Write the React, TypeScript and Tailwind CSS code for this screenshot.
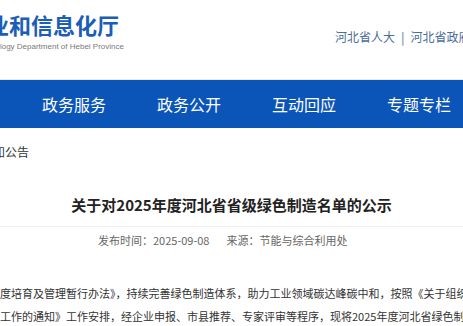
export default function App() {
  return (
    <div className="w-[463px] h-[326px] overflow-hidden bg-white font-['Noto_Sans_CJK_SC','Noto_Sans',sans-serif]">
      {/* header */}
      <div className="flex items-start h-[80px] border-b border-[#e6ebf2]">
        <div className="flex flex-col items-end w-[124px] shrink-0 pt-[9px]">
          <div className="whitespace-nowrap text-[22px] leading-[30px] font-bold text-[#1a5eb8] pr-[5px]">
            河北省工业和信息化厅
          </div>
          <div className="whitespace-nowrap text-[8px] leading-[10px] mt-[3px] text-[#7a7a7a] font-['Liberation_Sans',sans-serif]">
            Industry and Information Technology Department of Hebei Province
          </div>
        </div>
        <div className="ml-[211px] shrink-0 mt-[28px] flex items-center whitespace-nowrap text-[12px] leading-[18px] text-[#4a6d9a]">
          <span>河北省人大</span>
          <span className="mx-[6px] text-[#8a99ad] font-bold">|</span>
          <span>河北省政府</span>
        </div>
      </div>
      {/* nav */}
      <div className="flex items-center h-[48px] bg-[#0c55b8] pl-[42px] gap-[51px] text-white text-[16px] whitespace-nowrap">
        <span>政务服务</span>
        <span>政务公开</span>
        <span>互动回应</span>
        <span>专题专栏</span>
      </div>
      {/* breadcrumb */}
      <div className="ml-[-19px] mt-[16px] text-[12px] leading-[16px] text-[#333] whitespace-nowrap">
        通知公告
      </div>
      {/* title */}
      <div className="mt-[34px] border-b border-[#eeeeee] pb-[10px]">
        <div className="text-center text-[15px] leading-[22px] font-bold text-[#222] whitespace-nowrap">
          关于对2025年度河北省省级绿色制造名单的公示
        </div>
      </div>
      {/* meta */}
      <div className="flex ml-[98px] mt-[4px] text-[11px] leading-[18px] text-[#666] whitespace-nowrap gap-[17px]">
        <span>发布时间：2025-09-08</span>
        <span>来源：节能与综合利用处</span>
      </div>
      {/* body */}
      <div className="mt-[33px] text-[11px] leading-[23px] text-[#333] whitespace-nowrap">
        <div>度培育及管理暂行办法》，持续完善绿色制造体系，助力工业领域碳达峰碳中和，按照《关于组织开展</div>
        <div>工作的通知》工作安排，经企业申报、市县推荐、专家评审等程序，现将2025年度河北省绿色制造名单</div>
      </div>
    </div>
  );
}
